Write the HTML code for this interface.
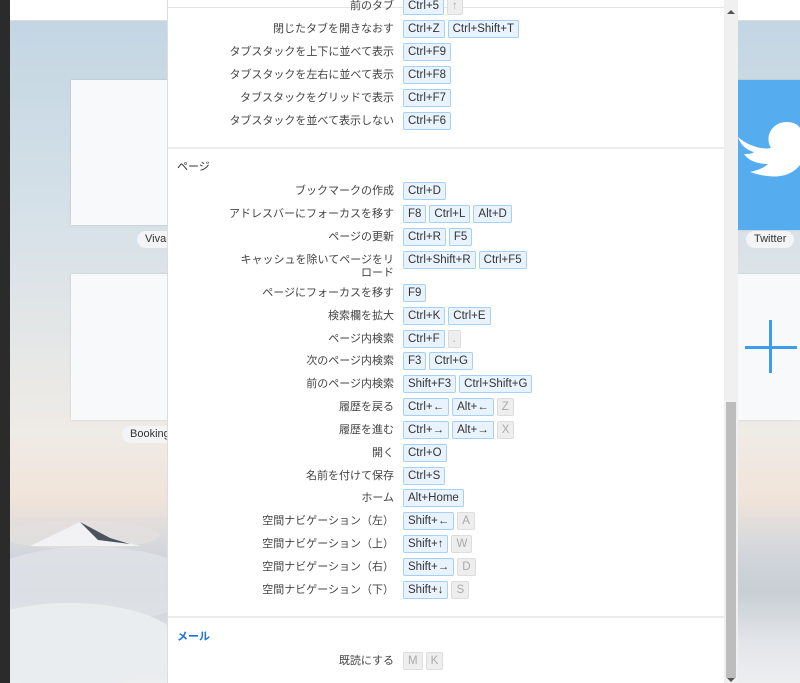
<!DOCTYPE html>
<html><head><meta charset="utf-8">
<style>
*{margin:0;padding:0;box-sizing:border-box}
body{width:800px;height:683px;overflow:hidden;position:relative;font-family:"Liberation Sans","Noto Sans CJK JP",sans-serif;background:#fff}
#bg{position:absolute;left:10px;top:21px;width:790px;height:662px;background:linear-gradient(180deg,#c3d6e3 0%,#d6e1e8 30%,#efebe6 62%,#f1e4da 72%,#d3d7dc 80%,#c8ced4 86%,#e3e6ea 94%,#eceef0 100%)}
#dark{position:absolute;left:0;top:0;width:10px;height:683px;background:#2b2b2b}
#topw{position:absolute;left:10px;top:0;width:790px;height:21px;background:#fff;border-bottom:1px solid #ddd}
.tile{position:absolute;background:#f8f9fa;box-shadow:0 0 2px rgba(0,0,0,.15)}
.lab{position:absolute;background:#f3f4f5;border-radius:9px;font-size:11px;color:#333;padding:2px 8px;height:17px}
#dlg{position:absolute;left:167px;top:0;width:571px;height:683px;background:#fff;border-left:1px solid #ddd}
#dlg .tl{position:absolute;left:0;top:7px;width:557px;height:1px;background:#e3e3e3}
.div{position:absolute;left:0;width:556px;height:2px;background:#ececec}
.row{position:absolute;left:0;width:556px;height:18px}
.l{position:absolute;right:330px;top:3px;font-size:11px;color:#444;text-align:right;white-space:nowrap;line-height:13px}
.k{position:absolute;left:235px;top:0;display:flex;gap:3px}
.k span{display:inline-block;height:18px;line-height:16px;padding:0 4px;font-size:11.5px;color:#333;background:#e8f3fd;border:1px solid #a6d0f7;border-radius:2px;white-space:nowrap}
.k span.d{background:#eee;border-color:#ddd;color:#aaa}
.h{position:absolute;left:9px;font-size:11px;color:#333}
#sb{position:absolute;left:724px;top:0;width:14px;height:683px;background:#f0f0f0}
#th{position:absolute;left:726px;top:402px;width:10px;height:276px;background:#bdbdbd}
</style></head><body>
<div id="bg"></div>
<svg style="position:absolute;left:10px;top:480px" width="160" height="203" viewBox="0 0 160 203">
<ellipse cx="70" cy="55" rx="80" ry="14" fill="#e6e1df" opacity=".6"/>
<path d="M20 66 L70 42 L85 50 L100 58 L130 66 Z" fill="#f2f2f4"/>
<path d="M70 42 L85 50 L100 58 L120 64 L88 60 Z" fill="#4a5360"/>
<ellipse cx="80" cy="105" rx="110" ry="38" fill="#e0e4e8" opacity=".8"/>
<ellipse cx="60" cy="165" rx="110" ry="42" fill="#eaedf0"/>
</svg>
<div id="dark"></div>
<div id="topw"></div>
<div class="tile" style="left:71px;top:80px;width:100px;height:145px"></div>
<div class="lab" style="left:137px;top:231px">Vivaldi</div>
<div class="tile" style="left:71px;top:274px;width:100px;height:146px"></div>
<div class="lab" style="left:122px;top:426px">Booking</div>
<div class="tile" style="left:738px;top:80px;width:62px;height:150px;background:#55acee">
<svg width="62" height="150" viewBox="0 0 62 150"><path d="M0 57 C10 66 25 70 33 68 C28 60 30 48 42 43 C52 40 60 44 62 48 L62 85 C50 100 30 98 12 92 C20 90 26 88 30 84 C18 84 10 80 6 74 C10 74 14 74 16 72 C8 70 2 64 0 57Z" fill="#fff"/></svg>
</div>
<div class="lab" style="left:746px;top:231px">Twitter</div>
<div class="tile" style="left:738px;top:274px;width:62px;height:146px"></div>
<div style="position:absolute;left:745px;top:346px;width:52px;height:3px;background:#3d9bf0"></div>
<div style="position:absolute;left:769px;top:320px;width:3px;height:53px;background:#3d9bf0"></div>

<div id="dlg">
<div class="tl"></div>
<div class="row" style="top:-3px"><div class="l">前のタブ</div><div class="k"><span>Ctrl+5</span><span class="d">↑</span></div></div>
<div class="row" style="top:20px"><div class="l">閉じたタブを開きなおす</div><div class="k"><span>Ctrl+Z</span><span>Ctrl+Shift+T</span></div></div>
<div class="row" style="top:43px"><div class="l">タブスタックを上下に並べて表示</div><div class="k"><span>Ctrl+F9</span></div></div>
<div class="row" style="top:66px"><div class="l">タブスタックを左右に並べて表示</div><div class="k"><span>Ctrl+F8</span></div></div>
<div class="row" style="top:89px"><div class="l">タブスタックをグリッドで表示</div><div class="k"><span>Ctrl+F7</span></div></div>
<div class="row" style="top:112px"><div class="l">タブスタックを並べて表示しない</div><div class="k"><span>Ctrl+F6</span></div></div>
<div class="div" style="top:147px"></div>
<div class="h" style="top:158px">ページ</div>
<div class="row" style="top:182px"><div class="l">ブックマークの作成</div><div class="k"><span>Ctrl+D</span></div></div>
<div class="row" style="top:205px"><div class="l">アドレスバーにフォーカスを移す</div><div class="k"><span>F8</span><span>Ctrl+L</span><span>Alt+D</span></div></div>
<div class="row" style="top:228px"><div class="l">ページの更新</div><div class="k"><span>Ctrl+R</span><span>F5</span></div></div>
<div class="row" style="top:251px"><div class="l" style="width:162px;white-space:normal">キャッシュを除いてページをリロード</div><div class="k"><span>Ctrl+Shift+R</span><span>Ctrl+F5</span></div></div>
<div class="row" style="top:284px"><div class="l">ページにフォーカスを移す</div><div class="k"><span>F9</span></div></div>
<div class="row" style="top:307px"><div class="l">検索欄を拡大</div><div class="k"><span>Ctrl+K</span><span>Ctrl+E</span></div></div>
<div class="row" style="top:330px"><div class="l">ページ内検索</div><div class="k"><span>Ctrl+F</span><span class="d">.</span></div></div>
<div class="row" style="top:352px"><div class="l">次のページ内検索</div><div class="k"><span>F3</span><span>Ctrl+G</span></div></div>
<div class="row" style="top:375px"><div class="l">前のページ内検索</div><div class="k"><span>Shift+F3</span><span>Ctrl+Shift+G</span></div></div>
<div class="row" style="top:398px"><div class="l">履歴を戻る</div><div class="k"><span>Ctrl+←</span><span>Alt+←</span><span class="d">Z</span></div></div>
<div class="row" style="top:421px"><div class="l">履歴を進む</div><div class="k"><span>Ctrl+→</span><span>Alt+→</span><span class="d">X</span></div></div>
<div class="row" style="top:444px"><div class="l">開く</div><div class="k"><span>Ctrl+O</span></div></div>
<div class="row" style="top:467px"><div class="l">名前を付けて保存</div><div class="k"><span>Ctrl+S</span></div></div>
<div class="row" style="top:489px"><div class="l">ホーム</div><div class="k"><span>Alt+Home</span></div></div>
<div class="row" style="top:512px"><div class="l">空間ナビゲーション（左）</div><div class="k"><span>Shift+←</span><span class="d">A</span></div></div>
<div class="row" style="top:535px"><div class="l">空間ナビゲーション（上）</div><div class="k"><span>Shift+↑</span><span class="d">W</span></div></div>
<div class="row" style="top:558px"><div class="l">空間ナビゲーション（右）</div><div class="k"><span>Shift+→</span><span class="d">D</span></div></div>
<div class="row" style="top:581px"><div class="l">空間ナビゲーション（下）</div><div class="k"><span>Shift+↓</span><span class="d">S</span></div></div>
<div class="div" style="top:616px"></div>
<div class="h" style="top:628px;color:#1a73e8;font-weight:bold">メール</div>
<div class="row" style="top:652px"><div class="l">既読にする</div><div class="k"><span class="d">M</span><span class="d">K</span></div></div>
</div>
<div id="sb"></div>
<div id="th"></div>
<div style="position:absolute;left:727px;top:10px;width:0;height:0;border-left:4px solid transparent;border-right:4px solid transparent;border-bottom:4px solid #555"></div>
<div style="position:absolute;left:727px;top:678px;width:0;height:0;border-left:4px solid transparent;border-right:4px solid transparent;border-top:4px solid #555"></div>
</body></html>
